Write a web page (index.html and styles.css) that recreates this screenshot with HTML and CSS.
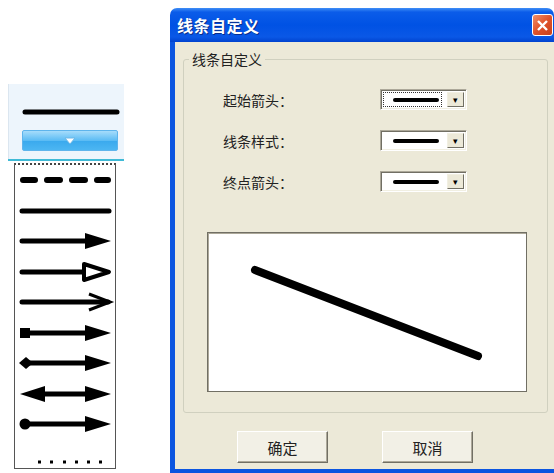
FILE: index.html
```html
<!DOCTYPE html>
<html lang="zh-CN">
<head>
<meta charset="UTF-8">
<title>线条自定义</title>
<link rel="stylesheet" href="styles.css">
</head>
<body>
<div class="page">
	<!-- 左侧：线型下拉面板 -->
	<div class="tool">
		<div class="tool-head">
			<svg class="tool-line" width="98" height="8" viewBox="0 0 98 8"><path d="M3 4H95" stroke="#000" stroke-width="5" stroke-linecap="round"/></svg>
			<div class="tool-btn"><svg width="12" height="8" viewBox="0 0 12 8"><path d="M1 1H11L6 7Z" fill="#fff" stroke="#6cb8e8" stroke-width="1"/></svg></div>
		</div>
		<div class="tool-rule"></div>
		<ul class="tool-list">
			<li><svg viewBox="0 0 100 30"><path d="M8 15H20M32 15H45M57 15H70M82 15H93" stroke="#000" stroke-width="6" stroke-linecap="round"/></svg></li>
			<li><svg viewBox="0 0 100 30"><path d="M7 15H94" stroke="#000" stroke-width="5" stroke-linecap="round"/></svg></li>
			<li><svg viewBox="0 0 100 30"><path d="M7 15H75" stroke="#000" stroke-width="5" stroke-linecap="round"/><path d="M70 7L96 15L70 23Z" fill="#000"/></svg></li>
			<li><svg viewBox="0 0 100 30"><path d="M7 15H68" stroke="#000" stroke-width="5" stroke-linecap="round"/><path d="M69 7L94 15L69 23Z" fill="#fff" stroke="#000" stroke-width="4" stroke-linejoin="round"/></svg></li>
			<li><svg viewBox="0 0 100 30"><path d="M7 15H93" stroke="#000" stroke-width="5" stroke-linecap="round"/><path d="M74 7L95 15L74 23" fill="none" stroke="#000" stroke-width="3"/></svg></li>
			<li><svg viewBox="0 0 100 30"><rect x="5" y="10" width="10" height="10" fill="#000"/><path d="M10 15H75" stroke="#000" stroke-width="5"/><path d="M70 7L96 15L70 23Z" fill="#000"/></svg></li>
			<li><svg viewBox="0 0 100 30"><path d="M4 15L11 9L18 15L11 21Z" fill="#000"/><path d="M12 15H75" stroke="#000" stroke-width="5"/><path d="M70 7L96 15L70 23Z" fill="#000"/></svg></li>
			<li><svg viewBox="0 0 100 30"><path d="M30 7L5 15L30 23Z" fill="#000"/><path d="M25 15H75" stroke="#000" stroke-width="5"/><path d="M70 7L96 15L70 23Z" fill="#000"/></svg></li>
			<li><svg viewBox="0 0 100 30"><circle cx="10" cy="15" r="5.5" fill="#000"/><path d="M12 15H75" stroke="#000" stroke-width="5"/><path d="M70 7L96 15L70 23Z" fill="#000"/></svg></li>
			<li class="dots"><svg viewBox="0 0 100 30"><path d="M23 15h3M35 15h3M48 15h3M60 15h3M72 15h3M84 15h3" stroke="#000" stroke-width="3"/></svg></li>
		</ul>
	</div>

	<!-- 右侧：线条自定义对话框 -->
	<div class="dialog">
		<div class="title">
			<span class="title-text">线条自定义</span>
			<span class="close"><svg width="13" height="13" viewBox="0 0 13 13"><path d="M2 2L11 11M11 2L2 11" stroke="#fff" stroke-width="2.4"/></svg></span>
		</div>
		<div class="body">
			<fieldset class="group">
				<legend>线条自定义</legend>
				<div class="row">
					<label>起始箭头：</label>
					<div class="combo"><div class="combo-val focus"><span class="stroke"></span></div><div class="combo-btn">▾</div></div>
				</div>
				<div class="row">
					<label>线条样式：</label>
					<div class="combo"><div class="combo-val"><span class="stroke"></span></div><div class="combo-btn">▾</div></div>
				</div>
				<div class="row">
					<label>终点箭头：</label>
					<div class="combo"><div class="combo-val"><span class="stroke"></span></div><div class="combo-btn">▾</div></div>
				</div>
				<div class="preview">
					<svg width="318" height="158" viewBox="0 0 318 158"><path d="M47 37L270 123" stroke="#000" stroke-width="8" stroke-linecap="round"/></svg>
				</div>
			</fieldset>
			<div class="buttons">
				<button>确定</button>
				<button>取消</button>
			</div>
		</div>
	</div>
</div>
</body>
</html>
```

FILE: styles.css
```css
* { padding: 0; margin: 0; box-sizing: border-box; }
li { list-style: none; }
html, body { overflow: hidden; }
body { background: #fff; font-family: "Noto Sans CJK SC", "Liberation Sans", sans-serif; }

.page { display: flex; align-items: flex-start; }

/* left tool */
.tool { width: 116px; margin: 84px 0 0 8px; }
.tool-head { height: 75px; background: #edf5fc; border-left: 1px solid #dbe6f0; padding: 24px 0 0 13px; }
.tool-line { display: block; }
.tool-btn { width: 96px; height: 21px; margin-top: 14px; border: 1px solid #5eb4ec; border-radius: 2px; background: linear-gradient(#a6dcfb, #5cbcf4 50%, #3aa9ee 52%, #4cb6f2); display: flex; align-items: center; justify-content: center; }
.tool-btn svg { display: block; }
.tool-rule { height: 2px; background: #3fbad6; }
.tool-list { margin: 2px 0 0 6px; width: 102px; height: 306px; border: 1px solid #555; border-top: 2px dotted #444; }
.tool-list li { height: 30.5px; }
.tool-list li svg { display: block; width: 100px; height: 30px; }
.tool-list li.dots { margin-top: 7px; }

/* dialog */
.dialog { width: 384px; height: 465px; margin: 8px 0 0 46px; display: flex; flex-direction: column; }
.title { height: 34px; border-radius: 7px 7px 0 0; background: linear-gradient(#3f8ef6 0%, #0b5ce9 12%, #0052e4 50%, #0a58e6 85%, #0042cf 100%); display: flex; align-items: center; justify-content: space-between; padding: 0 1px 0 7px; }
.title-text { color: #fff; font-size: 16px; font-weight: bold; letter-spacing: 0.5px; text-shadow: 1px 1px #0a2f8c; }
.close { width: 21px; height: 22px; border: 1px solid #fff; border-radius: 3px; background: linear-gradient(135deg, #f0906a, #e0522a 50%, #c8401c); display: flex; align-items: center; justify-content: center; }
.close svg { display: block; }

.body { flex: 1; background: #ece9d8; border-left: 5px solid #0b55e0; border-bottom: 4px solid #0b55e0; padding: 7px 6px 0 8px; }

.group { border: 1px solid #d0d0bf; border-radius: 3px; height: 364px; padding: 20px 0 0 0; min-width: 0; }
.group legend { margin-left: 5px; padding: 0 3px; font-size: 14px; line-height: 20px; color: #222; }

.row { display: flex; align-items: center; height: 21px; margin-bottom: 20px; padding-left: 39px; }
.row label { width: 157px; font-size: 14px; color: #222; }

.combo { width: 87px; height: 21px; display: flex; padding: 1px; border: 1px solid; border-color: #aca899 #fff #fff #aca899; box-shadow: inset 1px 1px #716f64, inset -1px -1px #f1efe2; background: #fff; }
.combo-val { flex: 1; display: flex; align-items: center; padding-left: 9px; margin: 1px; border: 1px solid transparent; }
.combo-val.focus { border: 1px dotted #333; }
.stroke { width: 46px; height: 4px; border-radius: 2px; background: #000; }
.combo-btn { width: 17px; margin: 1px 1px 1px 4px; background: #ece9d8; border: 1px solid; border-color: #f1efe2 #716f64 #716f64 #f1efe2; font-size: 9px; line-height: 13px; text-align: center; color: #000; }

.preview { width: 320px; height: 160px; margin: 40px 0 0 23px; background: #fff; border: 1px solid #716f64; box-shadow: inset 1px 1px #aca899; }
.preview svg { display: block; }

.buttons { display: flex; gap: 54px; padding: 18px 0 0 54px; }
.buttons button { width: 91px; height: 32px; background: #f2f0e6; border: 1px solid; border-color: #fff #716f64 #716f64 #fff; box-shadow: inset -1px -1px #aca899; font-family: "Noto Sans CJK SC", sans-serif; font-size: 15px; color: #222; }
```
